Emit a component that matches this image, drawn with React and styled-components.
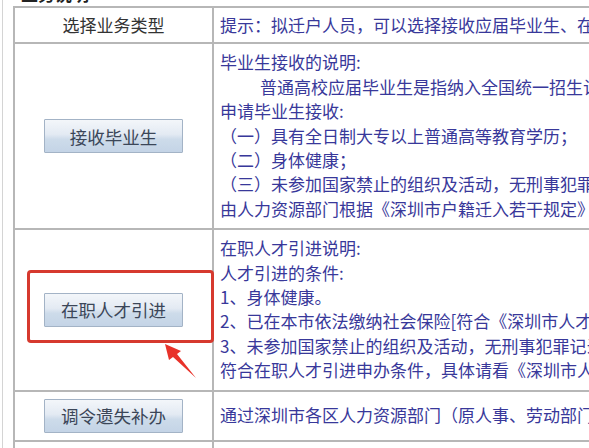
import React from 'react';
import styled, { createGlobalStyle } from 'styled-components';

const Global = createGlobalStyle`
  html, body {
    margin: 0;
    padding: 0;
    background: #fff;
    overflow: hidden;
  }
  body {
    font-family: "Noto Sans CJK SC", "Noto Sans", sans-serif;
  }
`;

const Page = styled.div`
  position: relative;
  width: 589px;
  height: 448px;
  overflow: hidden;
  margin-left: 2px;
  border-left: 1px solid #d4d4d4;
`;

const Title = styled.div`
  height: 20px;
  margin-top: -16px;
  margin-left: 18px;
  font-size: 17px;
  line-height: 20px;
  font-weight: bold;
  color: #222;
`;

const Table = styled.table`
  margin-top: 2px;
  margin-left: 10px;
  width: 900px;
  border-collapse: collapse;
  border: 2px solid #b7b7b7;
  font-size: 17px;
  color: #38389a;
`;

const LeftCell = styled.td`
  width: 197px;
  padding: ${(p) => (p.$tight ? '7px 0' : '5px 0')};
  border: 2px solid #b7b7b7;
  text-align: center;
  vertical-align: middle;
  color: ${(p) => (p.$head ? '#333' : 'inherit')};
  line-height: 24.4px;
`;

const TextCell = styled.td`
  padding: ${(p) => (p.$tight ? '5px 6px' : '6px 6px 7px')};
  border: 2px solid #b7b7b7;
  text-align: left;
  vertical-align: middle;
  white-space: nowrap;
  line-height: 24.4px;
`;

const Line = styled.div`
  padding-left: ${(p) => (p.$indent ? '40px' : '0')};
`;

const Button = styled.button`
  box-sizing: border-box;
  width: 139px;
  height: 34px;
  border: 1px solid #a3b3c6;
  border-radius: 1px;
  background: linear-gradient(180deg, #f3f6fa 0%, #e3eaf3 45%, #cddbea 60%, #c4d4e6 100%);
  font-family: "Noto Sans CJK SC", "Noto Sans", sans-serif;
  font-size: 17.5px;
  color: #3b4658;
  padding: 0;
  cursor: pointer;
`;

const Highlight = styled.div`
  position: absolute;
  left: 24px;
  top: 270px;
  width: 187px;
  height: 73px;
  box-sizing: border-box;
  border: 3px solid #d6392e;
  border-radius: 4px;
`;

const Arrow = styled.svg`
  position: absolute;
  left: 155px;
  top: 338px;
`;

const rows = [
  {
    label: '接收毕业生',
    lines: [
      '毕业生接收的说明:',
      ['普通高校应届毕业生是指纳入全国统一招生计划的应届毕业生', true],
      '申请毕业生接收:',
      '（一）具有全日制大专以上普通高等教育学历；',
      '（二）身体健康；',
      '（三）未参加国家禁止的组织及活动，无刑事犯罪记录；',
      '由人力资源部门根据《深圳市户籍迁入若干规定》办理',
    ],
  },
  {
    label: '在职人才引进',
    lines: [
      '在职人才引进说明:',
      '人才引进的条件:',
      '1、身体健康。',
      '2、已在本市依法缴纳社会保险[符合《深圳市人才引进实施办法》',
      '3、未参加国家禁止的组织及活动，无刑事犯罪记录；',
      '符合在职人才引进申办条件，具体请看《深圳市人才引进实施办法》',
    ],
  },
  {
    label: '调令遗失补办',
    tight: true,
    lines: ['通过深圳市各区人力资源部门（原人事、劳动部门）办理调令遗失补办'],
  },
];

export default function App() {
  return (
    <>
      <Global />
      <Page>
        <Title>业务说明</Title>
        <Table>
          <tbody>
            <tr>
              <LeftCell $head>选择业务类型</LeftCell>
              <TextCell $tight>提示：拟迁户人员，可以选择接收应届毕业生、在职人才引进</TextCell>
            </tr>
            {rows.map((row) => (
              <tr key={row.label}>
                <LeftCell $tight={row.tight}>
                  <Button>{row.label}</Button>
                </LeftCell>
                <TextCell $tight={row.tight}>
                  {row.lines.map((l, i) =>
                    Array.isArray(l) ? (
                      <Line key={i} $indent>{l[0]}</Line>
                    ) : (
                      <Line key={i}>{l}</Line>
                    )
                  )}
                </TextCell>
              </tr>
            ))}
            <tr>
              <LeftCell />
              <TextCell $tight>办理户籍迁入注意事项</TextCell>
            </tr>
          </tbody>
        </Table>
        <Highlight />
        <Arrow width="45" height="45" viewBox="0 0 45 45">
          <polygon points="7,6 23,13 19,16 38,40 15,19 11,22" fill="#e8322a" />
        </Arrow>
      </Page>
    </>
  );
}
